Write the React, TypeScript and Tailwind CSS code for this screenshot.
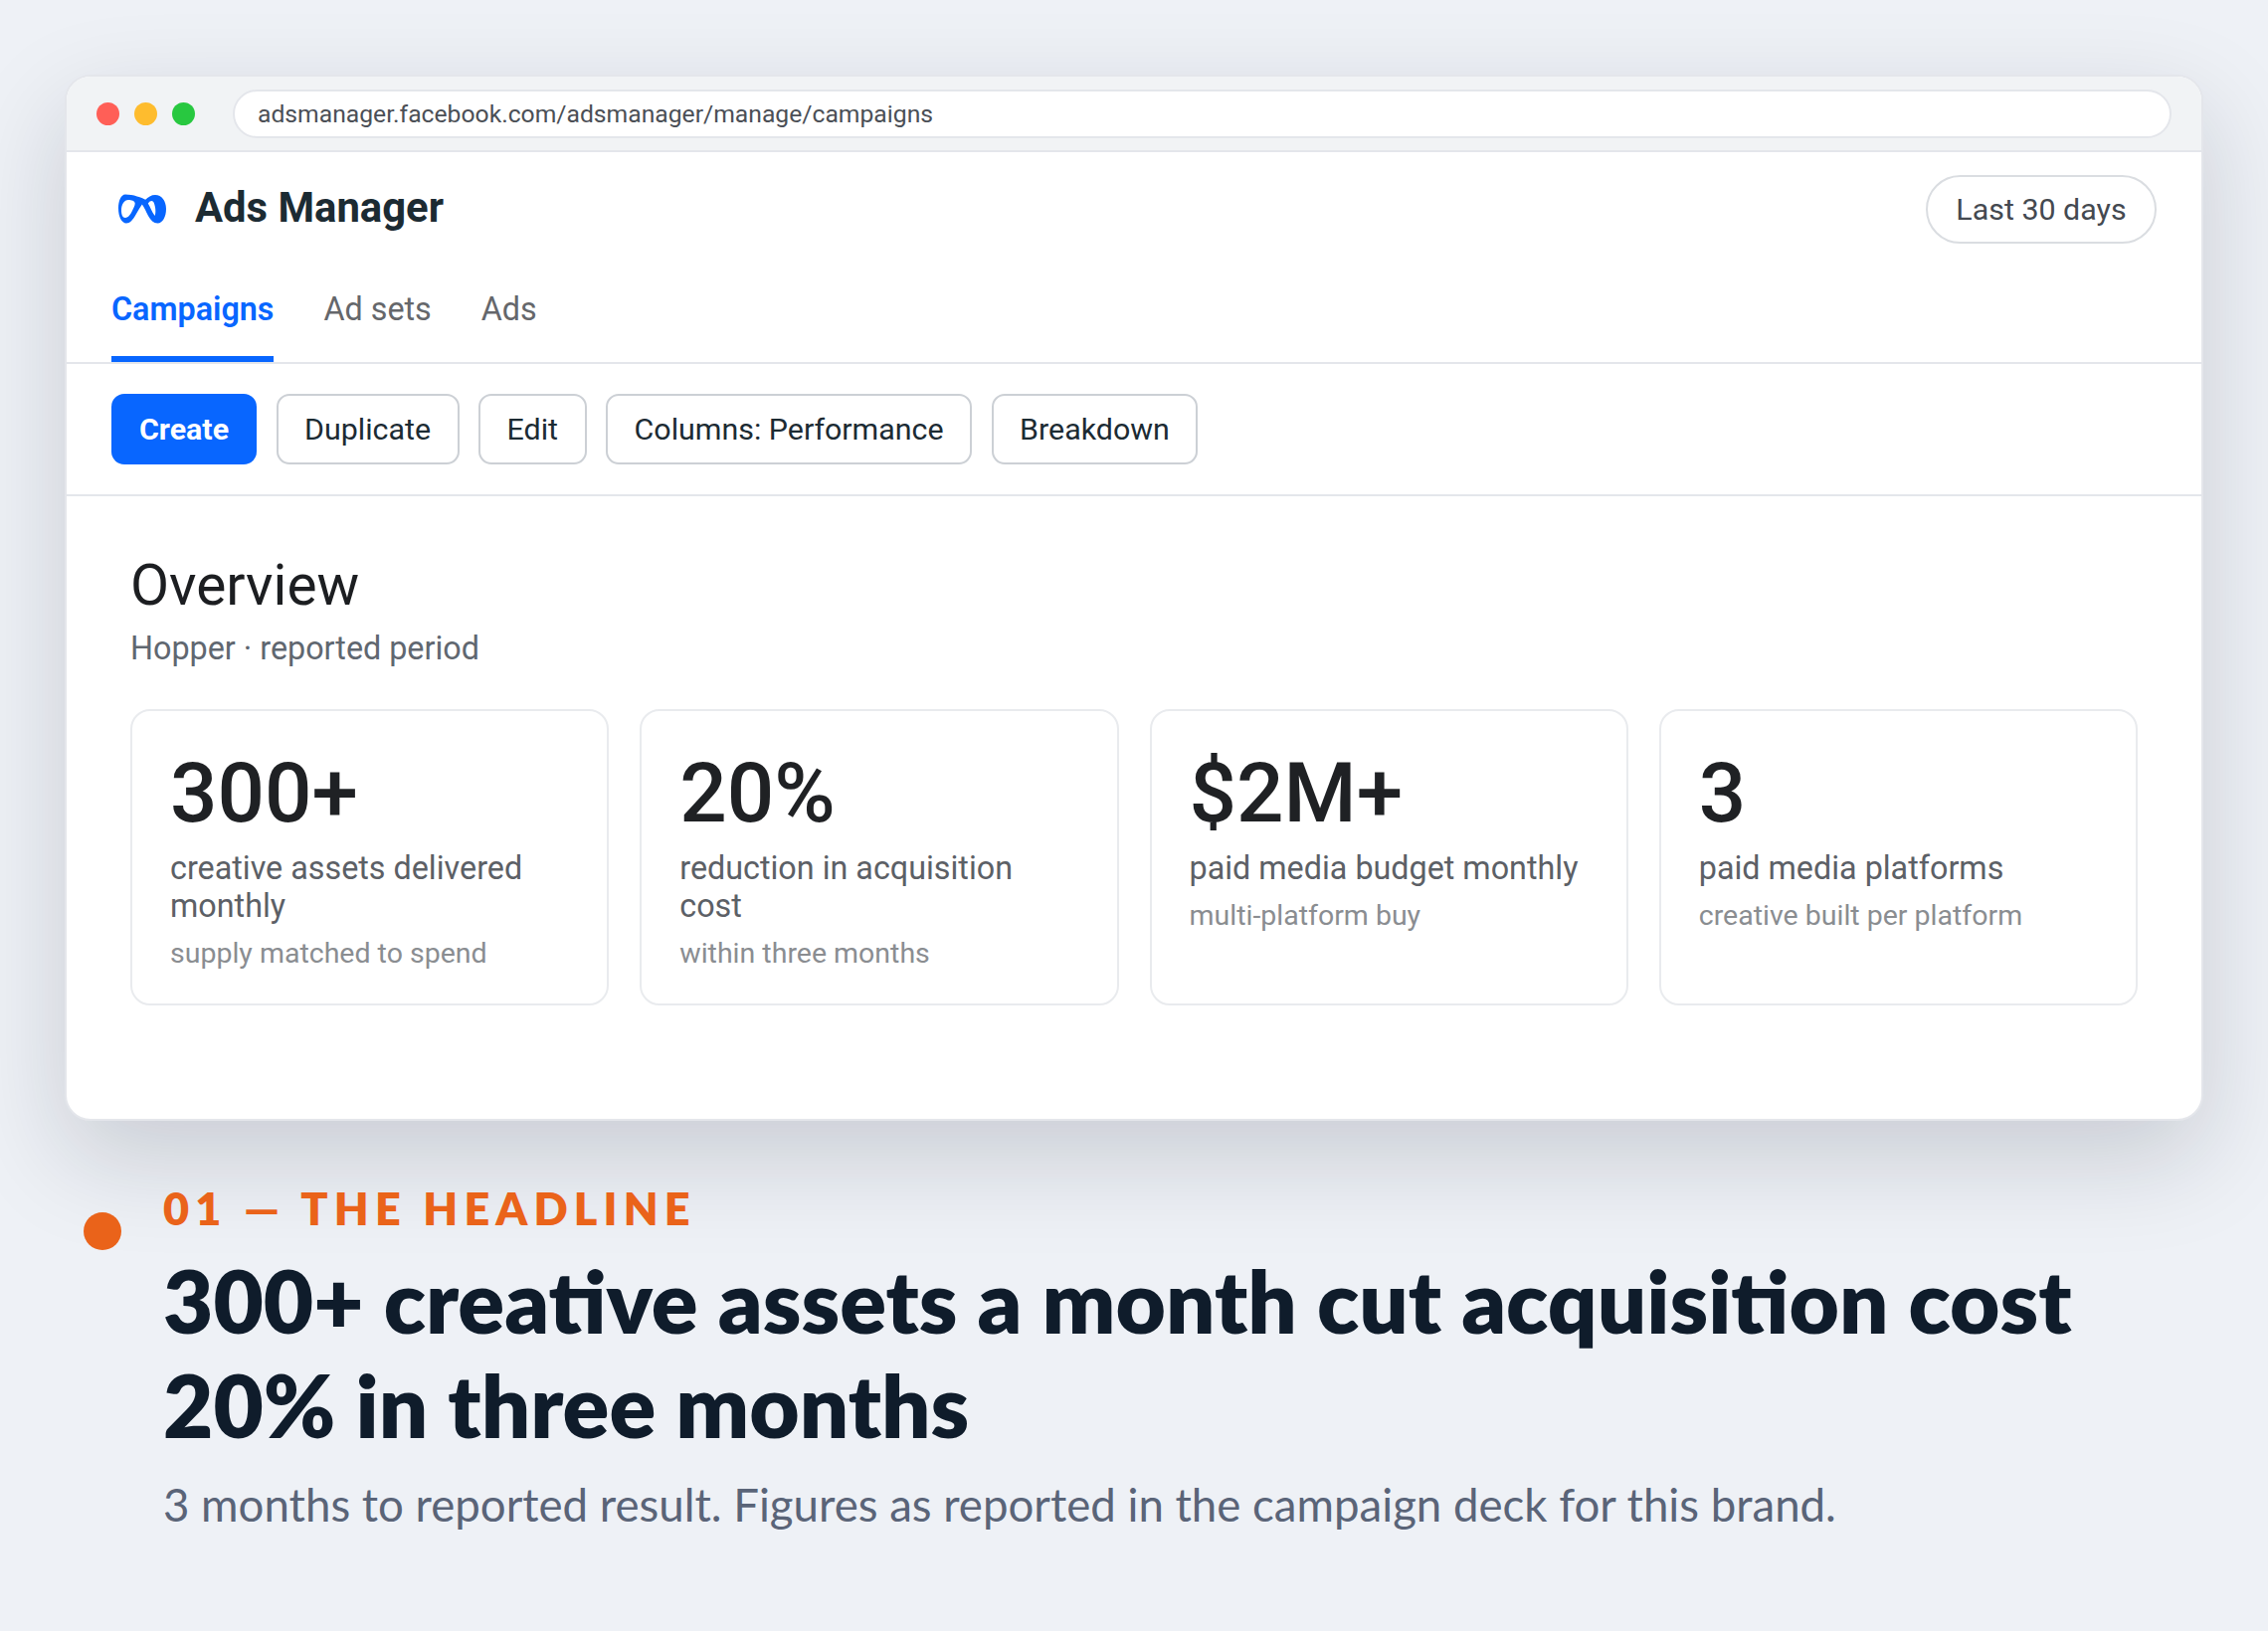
const tabs = ["Campaigns", "Ad sets", "Ads"];
const actions = ["Duplicate", "Edit", "Columns: Performance", "Breakdown"];

const stats = [
  { value: "300+", label: "creative assets delivered monthly", note: "supply matched to spend" },
  { value: "20%", label: "reduction in acquisition cost", note: "within three months" },
  { value: "$2M+", label: "paid media budget monthly", note: "multi-platform buy" },
  { value: "3", label: "paid media platforms", note: "creative built per platform" },
];

function MetaLogo() {
  return (
    <svg width="48" height="30" viewBox="0 0 48 30" fill="none" className="shrink-0">
      <path
        fillRule="evenodd"
        d="M7 .5C2.500 .5 0 7 0 14.500 0 23 3.500 29.500 8 29.500c3.500 0 6.500-3 10-9.500 2-3.500 4-7 6.500-10.500L29 6.500C23 3.500 15 .5 7 .5zM10 6C6 6 3 10.500 3 16.500c0 4.500 1.300 7.500 4 7.500 3 0 5.200-3.500 6.800-6.700 1.500-3 2.900-5.800 2.900-7.800C16.700 7 13 6 10 6z"
        fill="#0866ff"
      />
      <path
        fillRule="evenodd"
        d="M37 1c-4 0-7 2-10 5l-3.500 4c2.500 3.500 4.500 8 6.500 12 2.500 4.500 5.500 7.500 9.500 7.500C44.500 29.500 48 23 48 15 48 7 43.500 1 37 1zM33.500 7c-1.200 0-2.500.8-3.700 2.500 2.400 4 3.900 8.500 6.900 12.500.8-2.500.8-5.500.3-8.500-.6-3.700-1.800-6.500-3.500-6.500z"
        fill="#0866ff"
      />
    </svg>
  );
}

export default function App() {
  return (
    <div className="min-h-[1640px] w-[2280px] bg-[#eef1f6] font-['Roboto',sans-serif]">
      <div className="px-[65px] pt-[75px]">
        <div className="h-[1052px] overflow-hidden rounded-[26px] border-2 border-[#e4e6eb] bg-white shadow-[0_36px_100px_rgba(15,23,42,0.17)]">
          <div className="flex h-[76px] items-center border-b-2 border-[#e4e6eb] bg-[#f1f3f5] pl-[30px] pr-[30px]">
            <div className="flex gap-[15px]">
              <span className="size-[23px] rounded-full bg-[#ff5f57]" />
              <span className="size-[23px] rounded-full bg-[#febc2e]" />
              <span className="size-[23px] rounded-full bg-[#28c840]" />
            </div>
            <div className="ml-[38px] flex h-[49px] flex-1 items-center rounded-full border-2 border-[#e4e6eb] bg-white px-[23px] pt-[2px] text-[24.7px] text-[#4b4f56]">
              adsmanager.facebook.com/adsmanager/manage/campaigns
            </div>
          </div>

          <div className="flex items-center justify-between pl-[52px] pr-[45px] pt-[23px]">
            <div className="flex items-center gap-[29px] pb-[2px]">
              <MetaLogo />
              <span className="text-[41.8px] font-bold text-[#1c2b33]">Ads Manager</span>
            </div>
            <div className="flex h-[69px] w-[232px] items-center justify-center rounded-full border-2 border-[#dadde1] text-[30.4px] text-[#444950]">
              Last 30 days
            </div>
          </div>

          <div className="mt-[31px] flex gap-[50px] border-b-2 border-[#e4e6eb] pl-[45px]">
            {tabs.map((tab, i) => (
              <div
                key={tab}
                className={
                  i === 0
                    ? "flex h-[88px] items-start border-b-[6px] border-[#0866ff] pt-[11px] text-[32.3px] font-semibold text-[#0866ff]"
                    : "flex h-[88px] items-start pt-[11px] text-[32.3px] text-[#65676b]"
                }
              >
                {tab}
              </div>
            ))}
          </div>

          <div className="flex gap-[19.500px] border-b-2 border-[#e4e6eb] px-[45px] pb-[30px] pt-[30px]">
            <button className="h-[71px] w-[146px] rounded-[13px] bg-[#0866ff] text-[30.4px] font-bold text-white">
              Create
            </button>
            {actions.map((a) => (
              <button
                key={a}
                className="h-[71px] rounded-[13px] border-2 border-[#ccd0d5] px-[26.500px] text-[30.4px] text-[#1c2b33]"
              >
                {a}
              </button>
            ))}
          </div>

          <div className="pl-[64px] pr-[64px] pt-[55px]">
            <h1 className="text-[56.8px] leading-[70px] text-[#1c1e21]">Overview</h1>
            <p className="mt-[7px] text-[32.3px] leading-[42px] text-[#606770]">Hopper · reported period</p>
            <div className="mt-[40px] grid grid-cols-4 gap-[31px]">
              {stats.map((s) => (
                <div key={s.value} className="h-[298px] rounded-[20px] border-2 border-[#e9ebee] px-[38px] pt-[36px]">
                  <div className="text-[83.6px] font-medium leading-[92px] text-[#1f2124]">{s.value}</div>
                  <div className="mt-[11px] text-[32.3px] leading-[38px] text-[#5c6066]">{s.label}</div>
                  <div className="mt-[10px] text-[28.5px] leading-[38px] text-[#8a8d91]">{s.note}</div>
                </div>
              ))}
            </div>
          </div>
        </div>
      </div>

      <div className="flex gap-[42px] pl-[84px] pt-[61px] font-['Lato',sans-serif]">
        <span className="mt-[31px] size-[38px] shrink-0 rounded-full bg-[#ea631a]" />
        <div>
          <div className="text-[45px] font-extrabold leading-[54px] tracking-[0.136em] text-[#ea631a]">01 — THE HEADLINE</div>
          <h2 className="mt-[13px] text-[86.9px] font-extrabold leading-[105px] text-[#0f1c2b]">
            300+ creative assets a month cut acquisition cost
            <br />
            20% in three months
          </h2>
          <p className="mt-[20px] text-[45.6px] leading-[56px] text-[#5a6478]">
            3 months to reported result. Figures as reported in the campaign deck for this brand.
          </p>
        </div>
      </div>
    </div>
  );
}
